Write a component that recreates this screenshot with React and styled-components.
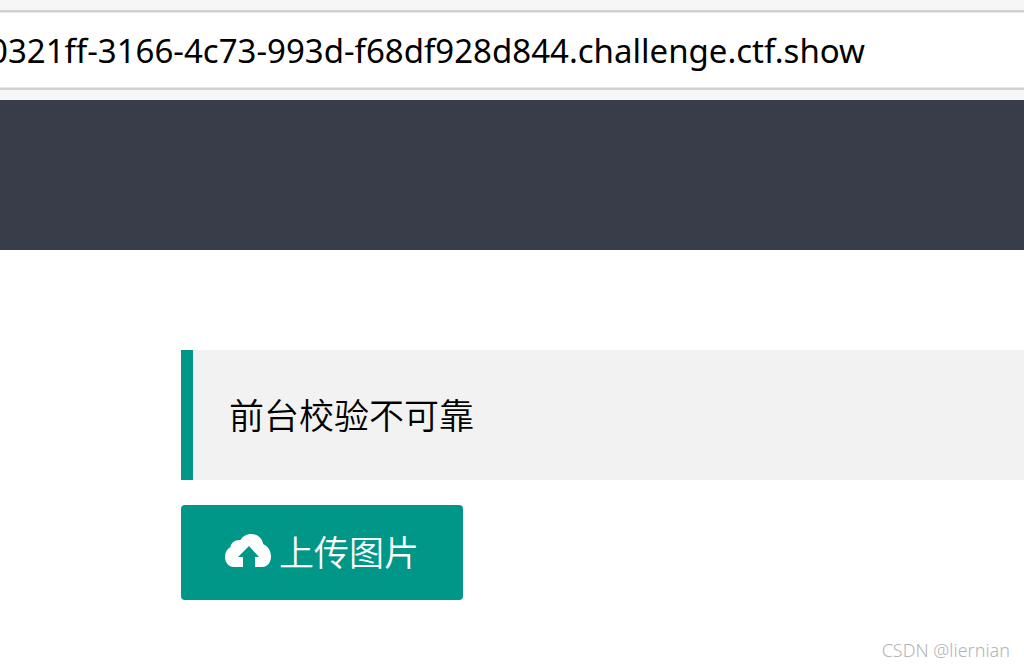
import React from "react";
import styled, { createGlobalStyle } from "styled-components";

const GlobalStyle = createGlobalStyle`
  *, *::before, *::after { box-sizing: border-box; }
  html, body { margin: 0; background: #ffffff; }
  body {
    color: #000000;
    font-family: "Noto Sans", "Noto Sans CJK SC", sans-serif;
  }
`;

const Page = styled.div`
  display: flex;
  flex-direction: column;
  min-height: 100vh;
  overflow: hidden;
`;

const BrowserBar = styled.div`
  display: flex;
  padding: 10px 0;
  background: #f6f6f6;
`;

const AddressInput = styled.input`
  flex: 1;
  min-width: 0;
  height: 80px;
  padding: 0;
  border: solid #d0d0d0;
  border-width: 2px 0;
  border-radius: 0;
  outline: none;
  background: #ffffff;
  box-shadow: inset 0 1px #e8e8e8, inset 0 -1px #e8e8e8;
  color: #000000;
  font-family: "Noto Sans", sans-serif;
  font-size: 33px;
  text-indent: -11px;
`;

const SiteHeader = styled.header`
  height: 150px;
  background: #393d49;
`;

const Content = styled.main`
  display: flex;
  flex-direction: column;
  align-items: flex-start;
  gap: 25px;
  padding: 100px 0 36px 181px;
`;

const Quote = styled.blockquote`
  align-self: stretch;
  margin: 0;
  padding: 36px 36px 38px;
  border-left: 12px solid #009688;
  background: #f2f2f2;
  font-family: "Noto Sans CJK SC", sans-serif;
  font-size: 35px;
  font-weight: 350;
  line-height: 56px;
`;

const UploadButton = styled.button`
  display: flex;
  align-items: center;
  gap: 8px;
  height: 95px;
  padding: 0 44px 3px;
  border: 0;
  border-radius: 4px;
  background: #009688;
  color: #ffffff;
  font-family: "Noto Sans CJK SC", sans-serif;
  font-size: 35px;
  font-weight: 350;
  line-height: 56px;
  white-space: nowrap;
  cursor: pointer;
`;

const Watermark = styled.footer`
  margin-top: auto;
  padding: 0 14px 7px;
  color: #b4b4b4;
  font-family: "Noto Sans", sans-serif;
  font-size: 18px;
  font-weight: 300;
  line-height: 22px;
  text-align: right;
`;

function CloudUploadIcon() {
  return (
    <svg width="46" height="34" viewBox="0 0 46 34" fill="currentColor" aria-hidden="true">
      <path d="M18 33H9C3.500 33 0 28.500 0 23C0 18.500 2 15 5.500 13C6 8.500 10 5.500 15.500 6C17.500 2.500 21.500 0 26 0C32.500 0 37 4 38.300 10.300C43 12.300 46 17 46 22.500C46 28.500 42.500 33 37 33H30V23H34L24 12L13 23H18Z" />
    </svg>
  );
}

export default function App() {
  return (
    <Page>
      <GlobalStyle />
      <BrowserBar>
        <AddressInput
          type="text"
          aria-label="Address"
          spellCheck={false}
          defaultValue="0321ff-3166-4c73-993d-f68df928d844.challenge.ctf.show"
        />
      </BrowserBar>
      <SiteHeader />
      <Content>
        <Quote>前台校验不可靠</Quote>
        <UploadButton type="button">
          <CloudUploadIcon />
          上传图片
        </UploadButton>
      </Content>
      <Watermark>CSDN @liernian</Watermark>
    </Page>
  );
}
